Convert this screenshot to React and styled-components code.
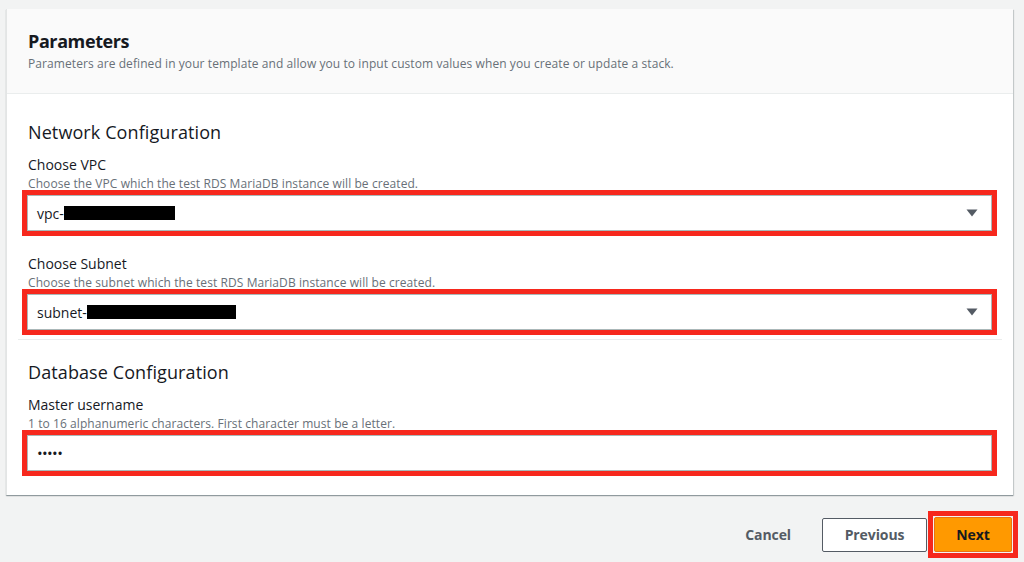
import styled, { createGlobalStyle } from 'styled-components';

const GlobalStyle = createGlobalStyle`
    html, body {
        margin: 0;
        padding: 0;
        background: #f2f3f3;
        font-family: "Open Sans", "Noto Sans", Arial, sans-serif;
        color: #16191f;
    }
`

const fields = [
    {
        section: 'Network Configuration',
        items: [
            { label: 'Choose VPC', hint: 'Choose the VPC which the test RDS MariaDB instance will be created.', prefix: 'vpc-', mask: 111, select: true },
            { label: 'Choose Subnet', hint: 'Choose the subnet which the test RDS MariaDB instance will be created.', prefix: 'subnet-', mask: 149, select: true },
        ],
    },
    {
        section: 'Database Configuration',
        items: [
            { label: 'Master username', hint: '1 to 16 alphanumeric characters. First character must be a letter.', prefix: '•••••', password: true },
        ],
    },
]

const Field = ({ item, first }) => (
    <FieldBox $first={first}>
        <Label>{item.label}</Label>
        <Hint>{item.hint}</Hint>
        <Input>
            <Value $password={item.password}>{item.prefix}</Value>
            {item.mask ? <Redact style={{ width: item.mask }} /> : null}
            {item.select ? (
                <Caret viewBox="0 0 12 8" width="12" height="8">
                    <path d="M0.5 0.5 H11.5 L6 7.5 Z" fill="#545b64" />
                </Caret>
            ) : null}
        </Input>
    </FieldBox>
)

const App = () => {
    return (
        <>
            <GlobalStyle />
            <Page>
                <Card>
                    <Header>
                        <Title>Parameters</Title>
                        <Description>Parameters are defined in your template and allow you to input custom values when you create or update a stack.</Description>
                    </Header>
                    {fields.map((group, i) => (
                        <Section key={group.section} $last={i === fields.length - 1} $first={i === 0}>
                            <SectionTitle>{group.section}</SectionTitle>
                            {group.items.map((item, j) => (
                                <Field key={item.label} item={item} first={j === 0} />
                            ))}
                        </Section>
                    ))}
                </Card>
                <Footer>
                    <LinkButton>Cancel</LinkButton>
                    <NormalButton>Previous</NormalButton>
                    <Highlight>
                        <PrimaryButton>Next</PrimaryButton>
                    </Highlight>
                </Footer>
            </Page>
        </>
    )
}

export default App

const Page = styled.div`
    width: 1024px;
    height: 562px;
    overflow: hidden;
    padding: 9px 11px 0 6px;
    box-sizing: border-box;
`

const Card = styled.div`
    background: #fff;
    border-left: 1px solid #e3e5e5;
    box-shadow: 0 1px 1px 0 rgba(0, 28, 36, 0.3), 1px 1px 1px 0 rgba(0, 28, 36, 0.15);
    display: flex;
    flex-direction: column;
`

const Header = styled.div`
    background: #fafafa;
    border-bottom: 1px solid #eaeded;
    height: 85px;
    box-sizing: border-box;
    padding: 20px 21px 0;
`

const Title = styled.h2`
    margin: 0;
    font-size: 18px;
    line-height: 24px;
    font-weight: 700;
    letter-spacing: -0.4px;
`

const Description = styled.div`
    margin-top: 3px;
    font-size: 12px;
    line-height: 16px;
    color: #687078;
    letter-spacing: 0.08px;
`

const Section = styled.div`
    margin: 0 11px;
    padding: ${({ $first }) => ($first ? '27px 10px 9px' : '21px 10px 24px')};
    border-bottom: ${({ $last }) => ($last ? 'none' : '1px solid #eaeded')};
`

const SectionTitle = styled.h3`
    margin: 0;
    font-size: 18px;
    line-height: 22px;
    font-weight: 400;
    letter-spacing: 0.1px;
`

const FieldBox = styled.div`
    margin-top: ${({ $first }) => ($first ? '12px' : '23px')};
    display: flex;
    flex-direction: column;
`

const Label = styled.label`
    font-size: 14px;
    line-height: 20px;
    color: #16191f;
`

const Hint = styled.div`
    font-size: 12px;
    line-height: 16px;
    color: #687078;
    margin-top: 1px;
    letter-spacing: 0.08px;
`

const Input = styled.div`
    margin: 3px 0 0 -1px;
    height: 36px;
    box-sizing: border-box;
    border: 1px solid #aab7b8;
    outline: 5px solid #f6281d;
    display: flex;
    align-items: center;
    padding: 0 13px 0 9px;
`

const Value = styled.span`
    font-size: ${({ $password }) => ($password ? '15px' : '14px')};
    letter-spacing: ${({ $password }) => ($password ? '-0.6px' : '0')};
    color: #16191f;
`

const Redact = styled.span`
    display: inline-block;
    height: 14px;
    background: #000;
`

const Caret = styled.svg`
    margin-left: auto;
`

const Footer = styled.div`
    display: flex;
    justify-content: flex-end;
    align-items: center;
    margin-top: 16px;
    margin-right: -5px;
`

const LinkButton = styled.button`
    background: none;
    border: none;
    font-family: inherit;
    font-size: 14px;
    font-weight: 700;
    color: #545b64;
    padding: 0 20px;
    margin-right: 11px;
    letter-spacing: -0.1px;
    cursor: pointer;
`

const NormalButton = styled.button`
    height: 34px;
    width: 105px;
    box-sizing: border-box;
    background: #fff;
    border: 1px solid #545b64;
    border-radius: 2px;
    font-family: inherit;
    font-size: 14px;
    font-weight: 700;
    color: #545b64;
    margin-right: 1px;
    letter-spacing: -0.1px;
    cursor: pointer;
`

const Highlight = styled.div`
    border: 5px solid #f6281d;
    padding: 1px;
    display: flex;
`

const PrimaryButton = styled.button`
    height: 35px;
    width: 78px;
    box-sizing: border-box;
    background: #ff9900;
    border: 1px solid #ec7211;
    border-radius: 2px;
    font-family: inherit;
    font-size: 14px;
    font-weight: 700;
    color: #16191f;
    letter-spacing: -0.1px;
    cursor: pointer;
`
